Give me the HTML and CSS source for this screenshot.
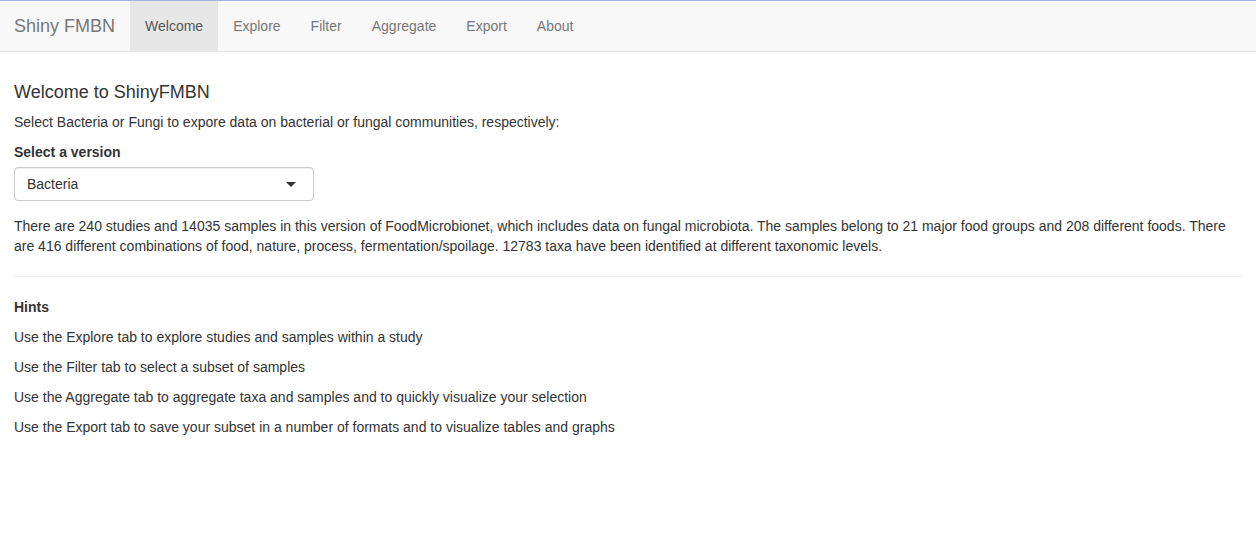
FILE: index.html
```html
<!DOCTYPE html>
<html>
<head>
<meta charset="utf-8">
<title>Shiny FMBN</title>
<link rel="stylesheet" href="styles.css">
</head>
<body>
<nav class="navbar">
  <div class="navbar-inner">
    <span class="brand">Shiny FMBN</span>
    <ul class="nav">
      <li class="active"><a>Welcome</a></li>
      <li><a>Explore</a></li>
      <li><a>Filter</a></li>
      <li><a>Aggregate</a></li>
      <li><a>Export</a></li>
      <li><a>About</a></li>
    </ul>
  </div>
</nav>
<main class="content">
  <h4 class="title">Welcome to ShinyFMBN</h4>
  <p>Select Bacteria or Fungi to expore data on bacterial or fungal communities, respectively:</p>
  <div class="form-group">
    <label class="label">Select a version</label>
    <div class="select">
      <span>Bacteria</span>
      <span class="caret"></span>
    </div>
  </div>
  <p>There are 240 studies and 14035 samples in this version of FoodMicrobionet, which includes data on fungal microbiota. The samples belong to 21 major food groups and 208 different foods. There are 416 different combinations of food, nature, process, fermentation/spoilage. 12783 taxa have been identified at different taxonomic levels.</p>
  <hr class="divider">
  <p><strong>Hints</strong></p>
  <p>Use the Explore tab to explore studies and samples within a study</p>
  <p>Use the Filter tab to select a subset of samples</p>
  <p>Use the Aggregate tab to aggregate taxa and samples and to quickly visualize your selection</p>
  <p>Use the Export tab to save your subset in a number of formats and to visualize tables and graphs</p>
</main>
</body>
</html>
```
FILE: styles.css
```css
* { box-sizing: border-box; }
html, body {
  margin: 0;
  padding: 0;
  background: #fff;
}
body {
  font-family: "Liberation Sans", Arial, Helvetica, sans-serif;
  font-size: 14px;
  line-height: 20px;
  color: #333;
}
.navbar {
  background: #f8f8f8;
  border: 1px solid #e7e7e7;
  border-top-color: #a4b2d9;
  border-left: 0;
  border-right: 0;
  margin-bottom: 20px;
}
.navbar-inner {
  display: flex;
  align-items: stretch;
  height: 50px;
}
.brand {
  padding: 15px 15px 15px 14px;
  font-size: 18px;
  line-height: 20px;
  color: #777;
}
.nav {
  list-style: none;
  margin: 0;
  padding: 0;
  display: flex;
}
.nav li a {
  display: block;
  padding: 15px 15px;
  line-height: 20px;
  color: #777;
}
.nav li.active a {
  background: #e7e7e7;
  color: #555;
}
.content {
  display: flow-root;
  padding: 0 14px;
}
.title {
  font-size: 18px;
  font-weight: 500;
  line-height: 20px;
  margin: 10px 0 10px;
}
p {
  margin: 0 0 10px;
}
.form-group {
  margin-bottom: 15px;
}
.label {
  display: inline-block;
  font-weight: bold;
  margin-bottom: 5px;
}
.select {
  width: 300px;
  height: 34px;
  border: 1px solid #ccc;
  border-radius: 4px;
  padding: 6px 12px;
  display: flex;
  align-items: center;
  justify-content: space-between;
  background: #fff;
  box-shadow: inset 0 1px 1px rgba(0,0,0,0.075);
}
.caret {
  width: 0;
  height: 0;
  border-left: 5px solid transparent;
  border-right: 5px solid transparent;
  border-top: 5px solid #333;
  margin-right: 5px;
}
.divider {
  border: 0;
  border-top: 1px solid #eee;
  margin: 20px 0;
}
```
